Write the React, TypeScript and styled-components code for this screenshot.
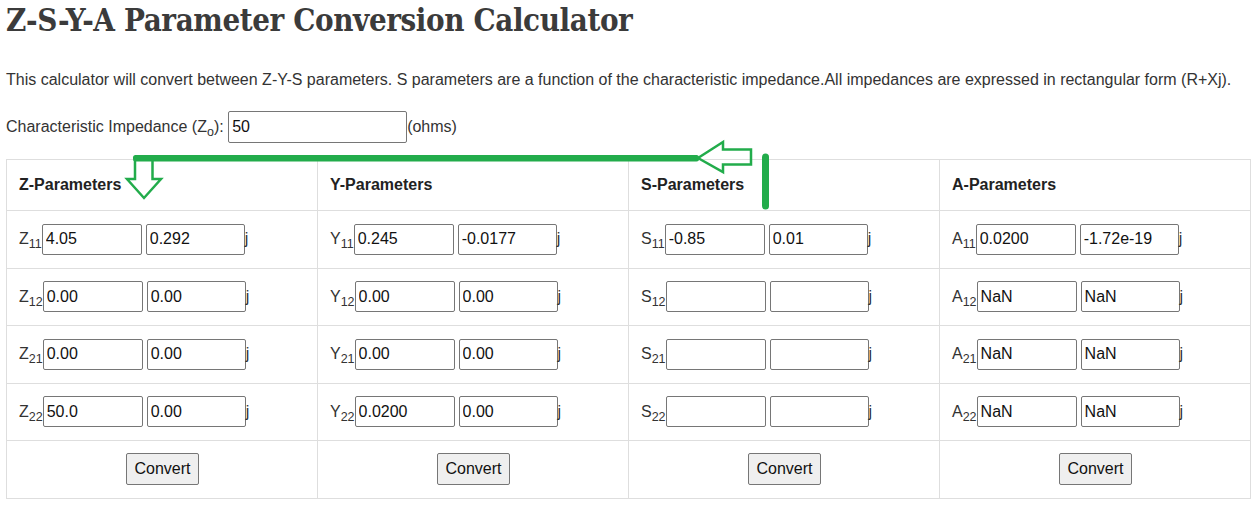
import React from 'react';
import styled, { createGlobalStyle } from 'styled-components';

const GlobalStyle = createGlobalStyle`
  html, body {
    margin: 0;
    padding: 0;
    background: #fff;
  }
  body {
    font-family: 'Liberation Sans', Arial, sans-serif;
    color: #333;
  }
`;

const Page = styled.div`
  position: relative;
  padding: 0 6px;
  width: 1245px;
`;

const Title = styled.h1`
  margin: 0;
  font-family: 'Roboto Slab', 'DejaVu Serif Condensed', 'DejaVu Serif', serif;
  font-size: 31px;
  font-weight: 600;
  line-height: 40px;
  color: #3b3b3b;
  letter-spacing: -0.4px;
`;

const Intro = styled.p`
  margin: 31px 0 0;
  font-size: 16px;
  line-height: 18px;
`;

const ImpedanceRow = styled.div`
  display: flex;
  align-items: center;
  margin-top: 22px;
  height: 32px;
  font-size: 16px;
`;

const Sub = styled.sub`
  font-size: 12.5px;
  line-height: 0;
  vertical-align: -4px;
`;

const TextBox = styled.input<{ $w: number; $h: number }>`
  box-sizing: border-box;
  width: ${(p) => p.$w}px;
  height: ${(p) => p.$h}px;
  margin: 0;
  padding: 0 3px;
  border: 1px solid #767676;
  border-radius: 2px;
  font-family: 'Liberation Sans', Arial, sans-serif;
  font-size: 16px;
  color: #111;
  background: #fff;
  outline: none;
`;

const Grid = styled.table`
  margin-top: 16px;
  width: 1245px;
  border-collapse: collapse;
  table-layout: fixed;
`;

const HeadCell = styled.th`
  border: 1px solid #dedede;
  padding: 15px 12px 15px;
  text-align: left;
  font-size: 16px;
  line-height: 20px;
  font-weight: bold;
  color: #222;
`;

const Cell = styled.td<{ $center?: boolean }>`
  border: 1px solid #dedede;
  padding: 12px 11px 12.5px 12px;
  text-align: ${(p) => (p.$center ? 'center' : 'left')};
`;

const Field = styled.div`
  display: flex;
  align-items: center;
  height: 32px;
  font-size: 16px;
  color: #333;
`;

const Label = styled.span`
  line-height: 18px;
  white-space: nowrap;
`;

const Gap = styled.span`
  display: inline-block;
  width: 4px;
`;

const Button = styled.button`
  box-sizing: border-box;
  height: 32px;
  padding: 0 7px;
  border: 1px solid #767676;
  border-radius: 2px;
  background: #efefef;
  font-family: 'Liberation Sans', Arial, sans-serif;
  font-size: 16px;
  color: #111;
  vertical-align: middle;
`;

const Overlay = styled.svg`
  position: absolute;
  left: 0;
  top: 0;
  width: 1257px;
  height: 506px;
  pointer-events: none;
`;

type Col = { letter: string; title: string; values: [string, string][] };

const cols: Col[] = [
  {
    letter: 'Z',
    title: 'Z-Parameters',
    values: [
      ['4.05', '0.292'],
      ['0.00', '0.00'],
      ['0.00', '0.00'],
      ['50.0', '0.00'],
    ],
  },
  {
    letter: 'Y',
    title: 'Y-Parameters',
    values: [
      ['0.245', '-0.0177'],
      ['0.00', '0.00'],
      ['0.00', '0.00'],
      ['0.0200', '0.00'],
    ],
  },
  {
    letter: 'S',
    title: 'S-Parameters',
    values: [
      ['-0.85', '0.01'],
      ['', ''],
      ['', ''],
      ['', ''],
    ],
  },
  {
    letter: 'A',
    title: 'A-Parameters',
    values: [
      ['0.0200', '-1.72e-19'],
      ['NaN', 'NaN'],
      ['NaN', 'NaN'],
      ['NaN', 'NaN'],
    ],
  },
];

const subs = ['11', '12', '21', '22'];

const GREEN = '#22ac4b';

export default function App() {
  return (
    <>
      <GlobalStyle />
      <Page>
        <Title>Z-S-Y-A Parameter Conversion Calculator</Title>
        <Intro>
          This calculator will convert between Z-Y-S parameters. S parameters are a function of the
          characteristic impedance.All impedances are expressed in rectangular form (R+Xj).
        </Intro>
        <ImpedanceRow>
          <Label>
            Characteristic Impedance (Z<Sub>o</Sub>):&nbsp;
          </Label>
          <TextBox $w={179} $h={32} defaultValue="50" />
          <span>(ohms)</span>
        </ImpedanceRow>
        <Grid>
          <thead>
            <tr>
              {cols.map((c) => (
                <HeadCell key={c.title}>{c.title}</HeadCell>
              ))}
            </tr>
          </thead>
          <tbody>
            {subs.map((s, i) => (
              <tr key={s}>
                {cols.map((c) => (
                  <Cell key={c.letter}>
                    <Field>
                      <Label>
                        {c.letter}
                        <Sub>{s}</Sub>
                      </Label>
                      <TextBox $w={100} $h={31} defaultValue={c.values[i][0]} />
                      <Gap />
                      <TextBox $w={99} $h={31} defaultValue={c.values[i][1]} />
                      <Label>j</Label>
                    </Field>
                  </Cell>
                ))}
              </tr>
            ))}
            <tr>
              {cols.map((c) => (
                <Cell key={c.letter} $center>
                  <Button>Convert</Button>
                </Cell>
              ))}
            </tr>
          </tbody>
        </Grid>
        <Overlay viewBox="0 0 1257 506">
          <rect x="133" y="155" width="566" height="6.5" rx="2.5" fill={GREEN} />
          <polyline
            points="135,160 135,179 127,179 144,198 161,179 152.5,179 152.5,160"
            fill="none"
            stroke={GREEN}
            strokeWidth="2.5"
            strokeLinejoin="miter"
          />
          <polygon
            points="698,158 723,142 723,149.5 751,149.5 751,164.5 723,164.5 723,172"
            fill="none"
            stroke={GREEN}
            strokeWidth="2.5"
          />
          <line x1="765.5" y1="157" x2="765.5" y2="206" stroke={GREEN} strokeWidth="7" strokeLinecap="round" />
        </Overlay>
      </Page>
    </>
  );
}
